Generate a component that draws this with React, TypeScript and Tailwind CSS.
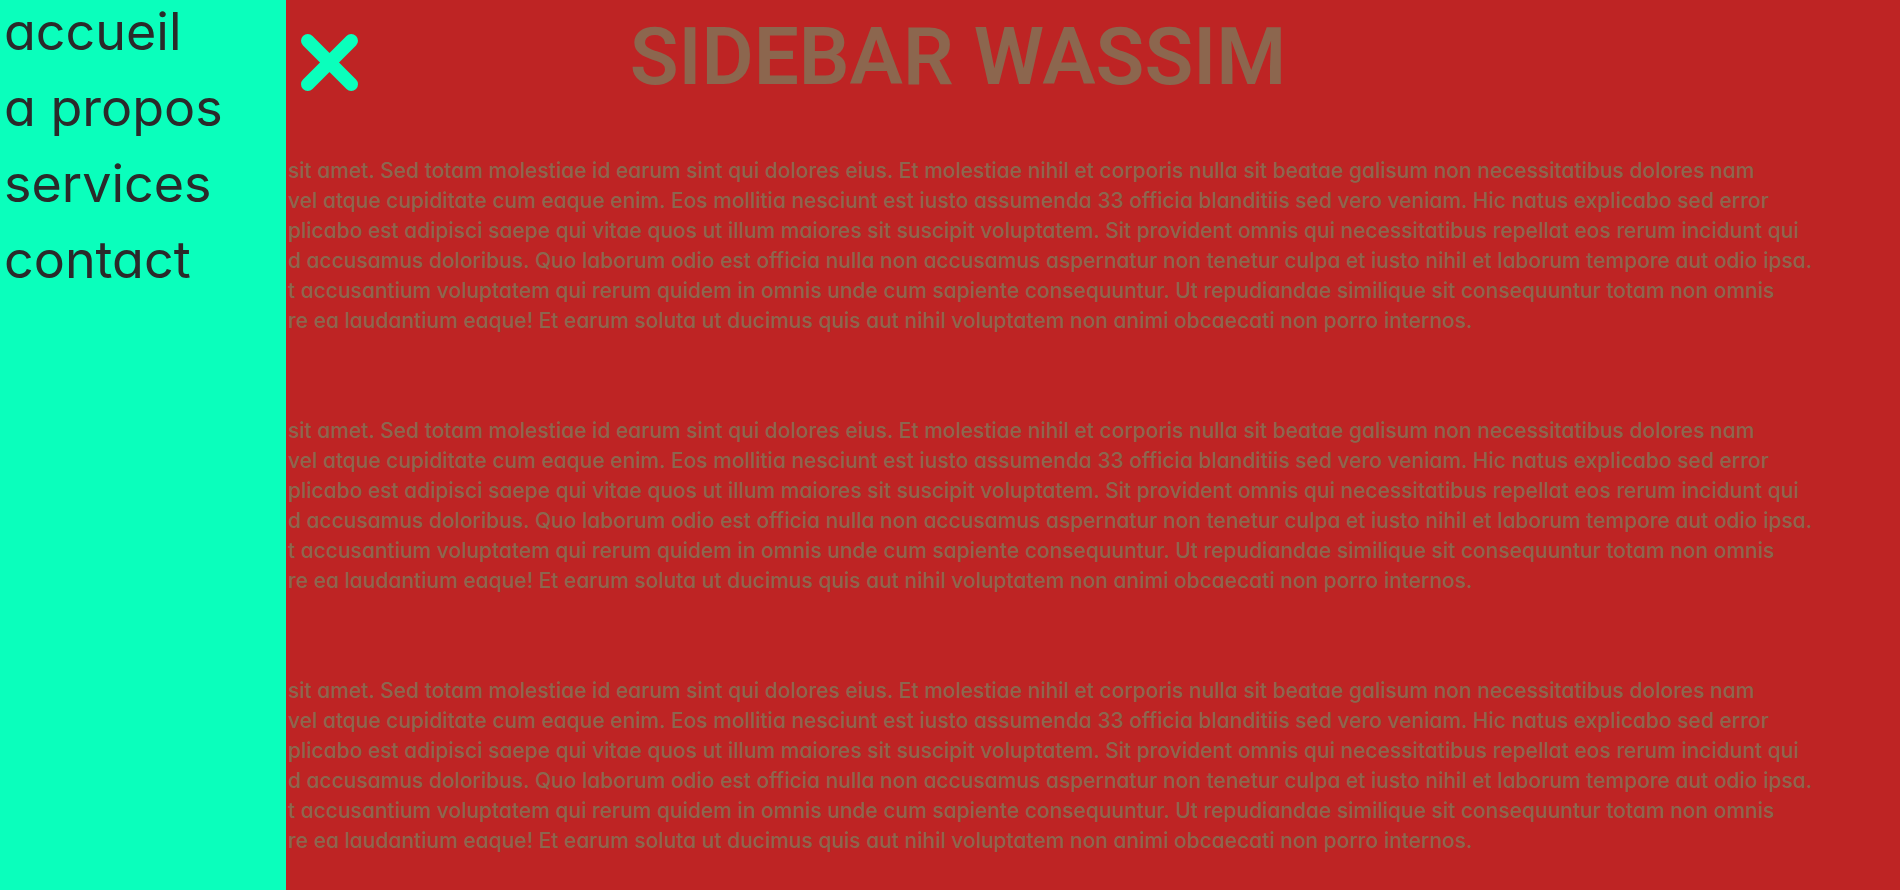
const links = ["accueil", "a propos", "services", "contact"];

const lines = [
  "sit amet. Sed totam molestiae id earum sint qui dolores eius. Et molestiae nihil et corporis nulla sit beatae galisum non necessitatibus dolores nam",
  "vel atque cupiditate cum eaque enim. Eos mollitia nesciunt est iusto assumenda 33 officia blanditiis sed vero veniam. Hic natus explicabo sed error",
  "plicabo est adipisci saepe qui vitae quos ut illum maiores sit suscipit voluptatem. Sit provident omnis qui necessitatibus repellat eos rerum incidunt qui",
  "d accusamus doloribus. Quo laborum odio est officia nulla non accusamus aspernatur non tenetur culpa et iusto nihil et laborum tempore aut odio ipsa.",
  "t accusantium voluptatem qui rerum quidem in omnis unde cum sapiente consequuntur. Ut repudiandae similique sit consequuntur totam non omnis",
  "re ea laudantium eaque! Et earum soluta ut ducimus quis aut nihil voluptatem non animi obcaecati non porro internos.",
];

function Sidebar() {
  return (
    <aside className="fixed inset-y-0 left-0 w-[286px] bg-[#0affbc]">
      <nav>
        <ul className="flex flex-col gap-3">
          {links.map((label) => (
            <li key={label}>
              <a
                href="#"
                className="block pl-1 text-[52px] leading-[64px] whitespace-nowrap text-[#2a2a2a]"
              >
                {label}
              </a>
            </li>
          ))}
        </ul>
      </nav>
    </aside>
  );
}

function CloseButton() {
  return (
    <button
      type="button"
      aria-label="Fermer"
      className="fixed top-[34px] left-[301px] size-[57px] cursor-pointer"
    >
      <svg
        viewBox="0 0 57 57"
        className="size-full"
        fill="none"
        stroke="#0affbc"
        strokeWidth="13.5"
        strokeLinecap="round"
      >
        <path d="M6.75 6.75 50.25 50.25M50.25 6.75 6.75 50.25" />
      </svg>
    </button>
  );
}

function TextBlock() {
  return (
    <p className="text-[21px] leading-[30px] font-[450] whitespace-nowrap">
      {lines.map((line) => (
        <span key={line} className="block">
          {line}
        </span>
      ))}
    </p>
  );
}

export default function App() {
  return (
    <div className="min-h-screen overflow-hidden bg-[#be2424] font-['Inter',sans-serif] text-[#8c664e] [font-feature-settings:'cv11']">
      <main>
        <h1 className="pl-4 text-center font-['Roboto',sans-serif] text-[80px] leading-[114px] font-semibold">
          SIDEBAR WASSIM
        </h1>
        <div className="flex flex-col gap-20 pt-[42px] pl-[288px]">
          <TextBlock />
          <TextBlock />
          <TextBlock />
        </div>
      </main>
      <Sidebar />
      <CloseButton />
    </div>
  );
}
